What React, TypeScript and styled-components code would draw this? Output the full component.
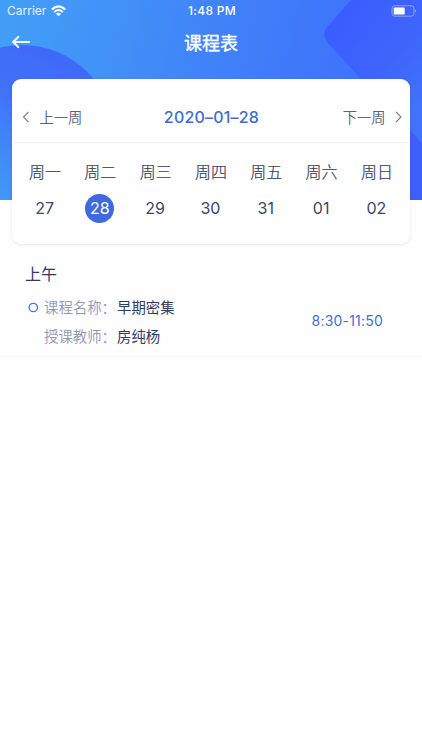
import React from 'react';
import styled, { createGlobalStyle } from 'styled-components';

const latin = "Inter, 'Noto Sans CJK SC', sans-serif";

const GlobalStyle = createGlobalStyle`
  * { box-sizing: border-box; }
  body { margin: 0; background: #fefefe; font-family: 'Noto Sans CJK SC', sans-serif; }
`;

const Screen = styled.main`
  position: relative;
  height: 750px;
  overflow: hidden;
  color: #3c4668;
`;

const Backdrop = styled.svg`
  position: absolute;
  top: 0;
  left: 0;
  width: 422px;
  height: 200px;
  z-index: -1;
`;

const StatusBar = styled.div`
  display: grid;
  grid-template-columns: 1fr auto 1fr;
  align-items: center;
  height: 22px;
  padding: 0 5px 0 7px;
  color: #fff;
  font: 12px/22px ${latin};
`;

const Carrier = styled.div`
  display: flex;
  align-items: center;
  gap: 5px;
  color: #e6f3ff;
`;

const Clock = styled.span`
  font-weight: 550;
  letter-spacing: 0.3px;
`;

const Battery = styled.svg`
  justify-self: end;
`;

const NavBar = styled.header`
  display: grid;
  grid-template-columns: 1fr auto 1fr;
  align-items: center;
  height: 40px;
  padding: 0 12px;
`;

const Title = styled.h1`
  margin: 0;
  color: #fff;
  font-size: 18px;
  line-height: 40px;
  font-weight: 400;
  -webkit-text-stroke: 0.35px currentColor;
`;

const BackButton = styled.button`
  display: flex;
  padding: 0;
  border: 0;
  background: none;
`;

const Card = styled.section`
  height: 165px;
  margin: 17px 12.4px 0 12.4px;
  border-radius: 9px;
  background: #fff;
  box-shadow: 0 1px 3px rgba(40, 50, 80, 0.12);
`;

const WeekBar = styled.div`
  display: grid;
  grid-template-columns: 1fr auto 1fr;
  align-items: center;
  height: 64px;
  margin: 0 2px;
  padding: 12px 5px 0 8px;
  border-bottom: 1px solid #f0f0f2;
`;

const WeekButton = styled.button<{ $end?: boolean }>`
  display: flex;
  align-items: center;
  justify-content: ${({ $end }) => ($end ? 'flex-end' : 'flex-start')};
  gap: 9px;
  padding: 0;
  border: 0;
  background: none;
  color: #404864;
  font: 300 14.3px/24px 'Noto Sans CJK SC', sans-serif;
  -webkit-text-stroke: 0.15px currentColor;
`;

const CurrentDate = styled.span`
  margin-left: -2px;
  color: #416bcd;
  font: 450 16px/24px ${latin};
  letter-spacing: 0.2px;
`;

const Days = styled.div`
  display: grid;
  grid-template-columns: repeat(7, 1fr);
  padding: 16px 5px 0;
`;

const Day = styled.div`
  display: flex;
  flex-direction: column;
  align-items: center;
  gap: 11px;
  font-size: 16px;
  line-height: 24px;
  font-weight: 300;
`;

const DayName = styled.span`
  color: #343e62;
  -webkit-text-stroke: 0.2px currentColor;
`;

const DayNumber = styled.span<{ $active?: boolean }>`
  width: 29px;
  height: 29px;
  margin-right: 1px;
  border-radius: 50%;
  background: ${({ $active }) => ($active ? '#3e6ade' : 'transparent')};
  color: ${({ $active }) => ($active ? '#fff' : 'inherit')};
  font: 370 16px/29px ${latin};
  text-align: center;
`;

const Session = styled.section`
  height: 113px;
  padding: 16px 39px 0 25px;
  border-bottom: 1px solid #f5f5f6;
`;

const SessionTitle = styled.h2`
  margin: 0;
  color: #2e3a60;
  font-size: 16px;
  line-height: 26px;
  font-weight: 400;
`;

const Course = styled.div`
  display: grid;
  grid-template-columns: 19px 1fr auto;
  align-items: center;
  margin-top: 7px;
`;

const Marker = styled.svg`
  align-self: start;
  margin: 9px 0 0 3px;
`;

const Details = styled.dl`
  display: grid;
  grid-template-columns: 73px 1fr;
  margin: 0;
  font-size: 14.4px;
  line-height: 28.5px;
`;

const Label = styled.dt`
  color: #858da9;
  font-weight: 300;
  -webkit-text-stroke: 0.15px currentColor;
  white-space: nowrap;
`;

const Value = styled.dd`
  margin: 0;
  color: #303b60;
`;

const Time = styled.time`
  margin-top: -2px;
  color: #456fd1;
  font: 400 14px/24px ${latin};
  letter-spacing: 0.2px;
`;

const days = [
  ['周一', '27'], ['周二', '28'], ['周三', '29'], ['周四', '30'],
  ['周五', '31'], ['周六', '01'], ['周日', '02'],
];

function Chevron({ right = false }: { right?: boolean }) {
  return (
    <svg width="8" height="12" viewBox="0 0 8 12" fill="none" stroke="#777c8e" strokeWidth="1.1">
      <path d={right ? 'M1 1l5 5-5 5' : 'M6.5 1l-5 5 5 5'} />
    </svg>
  );
}

function HeaderBackdrop() {
  return (
    <Backdrop viewBox="0 0 422 200" aria-hidden="true">
      <defs>
        <linearGradient id="sky" gradientUnits="userSpaceOnUse" x1="0" y1="20" x2="422" y2="110">
          <stop stopColor="#429ff7" />
          <stop offset=".3" stopColor="#418ff7" />
          <stop offset=".5" stopColor="#4082f8" />
          <stop offset=".8" stopColor="#3f74fb" />
          <stop offset="1" stopColor="#4070fb" />
        </linearGradient>
        <linearGradient id="disc" gradientUnits="userSpaceOnUse" x1="75" y1="60" x2="15" y2="215">
          <stop stopColor="#3f69f8" />
          <stop offset=".35" stopColor="#3f6cf8" stopOpacity=".85" />
          <stop offset="1" stopColor="#3f79f8" stopOpacity="0" />
        </linearGradient>
        <linearGradient id="diamond" gradientUnits="userSpaceOnUse" x1="335" y1="30" x2="422" y2="100">
          <stop stopColor="#3c5dfd" />
          <stop offset=".6" stopColor="#3e66fb" />
          <stop offset="1" stopColor="#4072fb" />
        </linearGradient>
      </defs>
      <rect width="422" height="200" fill="url(#sky)" />
      <circle cx="22" cy="138" r="93" fill="url(#disc)" />
      <path d="M351 0L327 27Q321 34 327 42L360 78L422 143V0Z" fill="url(#diamond)" />
      <path d="M400 120L422 143V200H400Z" fill="#3d60fb" />
    </Backdrop>
  );
}

export default function App() {
  return (
    <Screen>
      <GlobalStyle />
      <HeaderBackdrop />
      <StatusBar>
        <Carrier>
          Carrier
          <svg width="15" height="12" viewBox="0 0 15 12" fill="none" stroke="#fff" strokeWidth="2">
            <path d="M.8 4.4Q7.5-1.7 14.2 4.4M3.1 7Q7.5 3.1 11.9 7" />
            <path d="M4.9 8.7Q7.5 6.6 10.1 8.7L7.5 11.3Z" fill="#fff" stroke="none" />
          </svg>
        </Carrier>
        <Clock>1:48 PM</Clock>
        <Battery width="26" height="12" viewBox="0 0 26 12">
          <rect x="1" y=".8" width="22" height="10.4" rx="2.8" fill="none" stroke="#8ba4fd" />
          <rect x="2.7" y="2.4" width="11" height="7.2" rx="1.2" fill="#fff" />
          <path d="M24.3 4.2Q26 6 24.3 7.8Z" fill="#a0b5ff" />
        </Battery>
      </StatusBar>
      <NavBar>
        <BackButton aria-label="返回">
          <svg width="18" height="14" viewBox="0 0 18 14" fill="none" stroke="#fff" strokeWidth="2" strokeLinecap="round" strokeLinejoin="round">
            <path d="M17 7H1.2M6.3 1.9L1.2 7l5.1 5.1" />
          </svg>
        </BackButton>
        <Title>课程表</Title>
      </NavBar>
      <Card>
        <WeekBar>
          <WeekButton><Chevron />上一周</WeekButton>
          <CurrentDate>2020–01–28</CurrentDate>
          <WeekButton $end>下一周<Chevron right /></WeekButton>
        </WeekBar>
        <Days>
          {days.map(([name, date]) => (
            <Day key={date}>
              <DayName>{name}</DayName>
              <DayNumber $active={date === '28'}>{date}</DayNumber>
            </Day>
          ))}
        </Days>
      </Card>
      <Session>
        <SessionTitle>上午</SessionTitle>
        <Course>
          <Marker width="11" height="11" viewBox="0 0 11 11" fill="none" stroke="#4977dc" strokeWidth="1.3">
            <circle cx="5.3" cy="5.5" r="4.2" />
          </Marker>
          <Details>
            <Label>课程名称：</Label><Value>早期密集</Value>
            <Label>授课教师：</Label><Value>房纯杨</Value>
          </Details>
          <Time>8:30-11:50</Time>
        </Course>
      </Session>
    </Screen>
  );
}
